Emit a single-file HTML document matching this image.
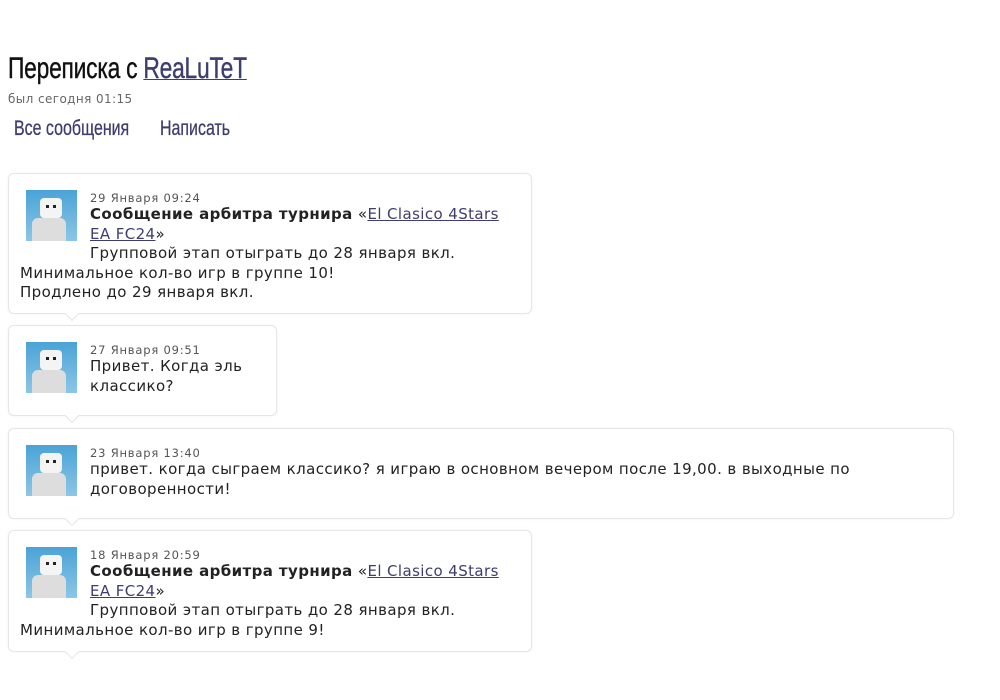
<!DOCTYPE html>
<html><head><meta charset="utf-8"><style>
body{margin:0;background:#fff;width:1000px;height:700px;overflow:hidden;font-family:"DejaVu Sans",Verdana,sans-serif;color:#222}
.h{position:absolute;left:8px;top:52px;font-family:"Liberation Sans",sans-serif;font-size:30px;transform:scaleX(.76);transform-origin:left;white-space:nowrap;color:#111;letter-spacing:-0.3px;-webkit-text-stroke:0.4px #111}
.h a{color:#3d3d70;text-decoration:underline;text-decoration-thickness:1px;-webkit-text-stroke:0.4px #3d3d70}
.sub{position:absolute;left:8px;top:92px;font-size:12px;color:#666;letter-spacing:0.4px}
.nav{position:absolute;top:117px;font-family:"Liberation Sans",sans-serif;font-size:21px;color:#3d3d70;transform:scaleX(.76);transform-origin:left;white-space:nowrap;-webkit-text-stroke:0.3px #3d3d70}
.box{position:absolute;left:8px;border:1px solid #e6e6e6;border-radius:6px;box-shadow:0 0 3px rgba(0,0,0,.05);background:#fff;box-sizing:border-box}
.box:after{content:"";position:absolute;left:58px;bottom:-6px;width:9px;height:9px;background:#fff;border-right:1px solid #e6e6e6;border-bottom:1px solid #e6e6e6;transform:rotate(45deg)}
.av{position:absolute;left:17px;top:16px;width:51px;height:51px;background:linear-gradient(#4aa3d6,#8cc6e6);overflow:hidden}
.av i{position:absolute;left:14px;top:8px;width:22px;height:20px;background:#f4f4f4;border-radius:4px}
.av b{position:absolute;left:6px;top:28px;width:34px;height:23px;background:#ddd;border-radius:6px 6px 0 0}
.av u{position:absolute;left:20px;top:15px;width:3px;height:3px;background:#222;box-shadow:7px 0 #222}
.t{position:absolute;left:11px;top:17px;right:10px;font-size:15px;line-height:19.5px;letter-spacing:0.4px}
.d{font-size:11.5px;color:#555;line-height:14px;padding-left:70px;letter-spacing:0.8px}
.in{padding-left:70px}
.t a{color:#3d3d70;text-decoration:underline}
</style></head><body>
<div class="h">Переписка с <a>ReaLuTeT</a></div>
<div class="sub">был сегодня 01:15</div>
<div class="nav" style="left:14px">Все сообщения</div>
<div class="nav" style="left:160px">Написать</div>

<div class="box" style="top:173px;width:524px;height:141px"><div class="av"><i></i><u></u><b></b></div>
<div class="t"><div class="d">29 Января 09:24</div><div class="in"><b>Сообщение арбитра турнира</b> «<a>El Clasico 4Stars</a><br><a>EA FC24</a>»<br>Групповой этап отыграть до 28 января вкл.</div>Минимальное кол-во игр в группе 10!<br>Продлено до 29 января вкл.</div></div>

<div class="box" style="top:325px;width:269px;height:91px"><div class="av"><i></i><u></u><b></b></div>
<div class="t"><div class="d">27 Января 09:51</div><div class="in">Привет. Когда эль<br>классико?</div></div></div>

<div class="box" style="top:428px;width:946px;height:91px"><div class="av"><i></i><u></u><b></b></div>
<div class="t"><div class="d">23 Января 13:40</div><div class="in">привет. когда сыграем классико? я играю в основном вечером после 19,00. в выходные по<br>договоренности!</div></div></div>

<div class="box" style="top:530px;width:524px;height:122px"><div class="av"><i></i><u></u><b></b></div>
<div class="t"><div class="d">18 Января 20:59</div><div class="in"><b>Сообщение арбитра турнира</b> «<a>El Clasico 4Stars</a><br><a>EA FC24</a>»<br>Групповой этап отыграть до 28 января вкл.</div>Минимальное кол-во игр в группе 9!</div></div>
</body></html>
